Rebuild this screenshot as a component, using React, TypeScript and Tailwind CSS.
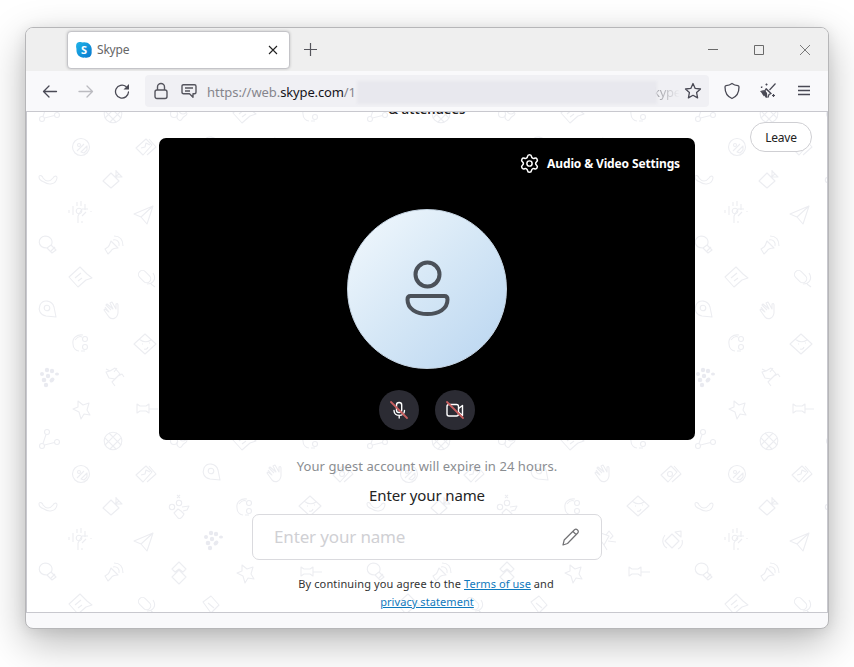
import { ReactNode } from 'react'
import { Settings } from 'lucide-react'

type Glyph = { x: number; y: number; art: ReactNode }

const TILE_HEIGHT = 327

const share = <><circle cx="-7" cy="5" r="2.500" /><circle cx="8" cy="1" r="2.500" /><circle cx="-2" cy="-9" r="2.500" /><path d="M-4.500 4 5.500 1.500M-6 2.500-3-6.500" /></>
const globe = <><circle r="8.800" /><path d="M-8-3 3 8M-4-8 8 4M-8 4 4-8M-3 8 8-3" /></>
const note = <path d="M-11 0 0-10 7-3 12 1 6 3-2 10zM-5 1 1-4M-2 4l4-3" />
const headset = <><path d="M3-8C-3-9-8-5-7 1c0 4 3 7 6 7M-5-3c3-4 5-4 7-3M1 8h4" /><circle cx="5" cy="-4" r="2.500" /><circle cx="5" cy="4" r="2.500" /></>
const gallery = <path d="M-10 1 0-8 6-2-3 8zM3-8l7 8L1 8M-5 1l4-1 1-4 4 2" />
const pin = <><path d="M-8-5c3-6 12-5 14 2l2 10-10-1c-6-1-8-6-6-11z" /><circle cx="-1" cy="-2" r="2.800" /></>
const hand = <path d="m-2-1-5-5 1-1 6 5-3-6 2-1 4 7V-7q2-1 2 1v8c-1 6-6 7-9 4L-9-1l1-1 4 3-4-5" />
const dice = <path d="M-11 0 0-10 11 0 0 10zM-6-5q6 5 12 1M-3 0h1M4-1h1M-1 5q3 1 4-2" />
const dots = <g fill="#e9eaf0" stroke="none"><circle cx="-7" cy="-3" r="2" /><circle cx="-2" cy="-7" r="2.200" /><circle cx="3" cy="-6" r="2.200" /><ellipse cx="8" cy="-3" rx="2" ry="1.500" /><circle cx="-5" cy="3" r="2.300" /><circle cx="-1" cy="-1" r="2.200" /><circle cx="-3" cy="8" r="2.200" /><ellipse cx="3" cy="3" rx="2.800" ry="2" transform="rotate(-45 3 3)" /></g>
const runner = <path d="M-8-8-4-6 1-9l5 6-5 5-6-1-3-6 4-1M0-5l3-4M2 1-2 5 1 9M4-1l4-2 2 3" />
const star = <path d="m-3-8 5 4 6-2-2 7 3 5-6-1-3 5-2-7-6-3 5-2z" />
const pushpin = <path d="M-9-5v9l3-2h6l3 2v-9L0-3h-6zM3-3v5M3 0h9" />

// One tile of the wallpaper, 328x327. Every glyph is drawn around its own centre.
const glyphs: Glyph[] = [
  { x: 22, y: 2, art: share },
  { x: 86, y: 2, art: globe },
  { x: 152, y: 2, art: <><circle cx="4" cy="-4" r="4" /><circle cx="-5" cy="0" r="3.500" /><path d="M-1 0C-4 4 1 9 3 5s5-2 5-6" /></> },
  { x: 217, y: 1, art: note },
  { x: 283, y: 1, art: headset },
  { x: 54, y: 35, art: <><circle r="8.500" /><circle cx="-2" cy="-2" r="1.500" /><path d="m-4 4 7-7M0 5l6-6v4L3 6z" /></> },
  { x: 119, y: 35, art: gallery },
  { x: 185, y: 34, art: pin },
  { x: 249, y: 35, art: hand },
  { x: 316, y: 35, art: <><path d="M-10 1 0-8 6-2-3 8zM3-8l7 8L1 8" /><circle cx="-1" r="2.500" /></> },
  { x: 21, y: 68, art: <path d="M-9-3c0-3 4-1 4 1 3 4 7 4 10 0 1-2 4-3 4 0C8 5 0 5-4 2c-3-1-5-3-5-5z" /> },
  { x: 85, y: 68, art: <path d="M-9 1-1-7 7 1-1 8zM4-10v7h6L4-9M3-3l4-3" /> },
  { x: 152, y: 69, art: <><circle cx="-7" cy="-1" r="2.700" /><circle cx="0" cy="-5" r="2.700" /><path d="M-5 5-1 1 2 3 5 6q-3 6-6 4zM3-1l7-1-2 4-4 1M-2-13l3 3M1-13l-3 3" /></> },
  { x: 217, y: 68, art: headset },
  { x: 283, y: 67, art: dice },
  { x: 53, y: 100, art: <><circle cx="-1" cy="-1" r="2.800" /><path d="M-7-6V3M-3-10v4M1-11v5M5-8v6M8-3H2L-2 4v7M2 4l4-4M-11-2v3M11-1v1M2 9v2" /></> },
  { x: 118, y: 102, art: <path d="M-11 0 8-8 2 10-4 3zM8-8-4 3" /> },
  { x: 186, y: 101, art: dots },
  { x: 251, y: 101, art: <path d="M-8-8 3-4-2 5-7-2zM0-5l3-4 4 5-3 3M2 1l8 1M-2 5l3 5" /> },
  { x: 317, y: 101, art: <path d="M-7 1 0-6 7 1 0 8zM3-8l6 5V-9zM-7-5c-4 5-2 11 2 13M6 9c4-2 5-6 4-9" /> },
  { x: 20, y: 132, art: <path d="M4 2C7-4 3-8-2-8c-8 1-8 12 2 12M0 4l4-3 5 5-4 3zM4 7l4-4" /> },
  { x: 87, y: 133, art: <path d="m-3-4 7 7C0 3-2 4-3 6L-6 9-9 4-6 2C-4 0-4-2-3-4zM0-9c6 0 9 4 9 10M-1-5C3-6 6-3 5 1" /> },
  { x: 152, y: 134, art: <path d="m-7-4 7-7 7 7-3 3-4-3-4 3zM-7 4l7-7 7 7-7 7z" /> },
  { x: 218, y: 134, art: star },
  { x: 283, y: 133, art: pushpin },
  { x: 53, y: 165, art: note },
  { x: 119, y: 166, art: <><rect x="-9" y="-4" width="14" height="8" rx="4" transform="rotate(45)" /><path d="M7-5c4 6 0 11-6 11M5 6l4 3" /></> },
  { x: 184, y: 166, art: <path d="M-8-3 0-9 8 0 0 8zM-3-2l6 5" /> },
  { x: 21, y: 198, art: pin },
  { x: 86, y: 199, art: hand },
  { x: 53, y: 231, art: headset },
  { x: 118, y: 232, art: dice },
  { x: 22, y: 265, art: dots },
  { x: 87, y: 265, art: runner },
  { x: 54, y: 297, art: star },
  { x: 119, y: 297, art: pushpin },
]

// Glyphs on the tile's upper edge are repeated on the lower one, so that none is cut.
const wrapped = glyphs
  .filter((g) => g.y < 12)
  .map((g) => ({ ...g, y: g.y + TILE_HEIGHT }))

function Wallpaper() {
  return (
    <svg className="absolute inset-0 size-full" fill="none">
      <defs>
        <pattern id="doodles" width="328" height={TILE_HEIGHT} patternUnits="userSpaceOnUse">
          <g stroke="#ecedf1" strokeWidth="1.1" strokeLinejoin="round">
            {[...glyphs, ...wrapped].map((g, i) => (
              <g key={i} transform={`translate(${g.x} ${g.y})`}>{g.art}</g>
            ))}
          </g>
        </pattern>
      </defs>
      <rect width="100%" height="100%" fill="url(#doodles)" />
    </svg>
  )
}

function TitleBar() {
  return (
    <div className="flex h-[43px] shrink-0 items-center bg-[#efefef] pl-[41px]">
      <div className="flex h-[38px] w-[223px] items-center rounded-[4px] border border-[#c4c4c8] bg-white pr-[11px] pl-2 shadow-[0_0_3px_rgba(0,0,0,0.2)]">
        <svg width="16" height="16" viewBox="0 0 16 16">
          <defs>
            <linearGradient id="skype" x1="0" y1="0" x2="1" y2="1">
              <stop stopColor="#20b4e8" />
              <stop offset="1" stopColor="#0878ce" />
            </linearGradient>
          </defs>
          <path d="M1 1c2-1.500 4-1 6-.6 6-.8 9.500 4 8.600 8.600.6 5-2 7.500-7 6.600C3 16 0 12 .5 7 0 5-.3 3 1 1z" fill="url(#skype)" />
          <text x="8" y="11.800" textAnchor="middle" fill="white" fontSize="11" fontWeight="700" fontFamily="Open Sans">S</text>
        </svg>
        <span className="ml-[5px] flex-1 text-[12px] tracking-[-0.2px] text-[#666]">Skype</span>
        <svg width="10" height="10" stroke="#222" strokeWidth="1.1"><path d="m1 1 8 8M9 1 1 9" /></svg>
      </div>
      <svg className="ml-[14px]" width="13" height="13" stroke="#55555c" strokeWidth="1.2"><path d="M6.500 0v13M0 6.500h13" /></svg>
      <div className="ml-auto flex items-center gap-9 pr-[18px]">
        <svg width="10" height="10" stroke="#6a6a6a"><path d="M0 4.500h10" /></svg>
        <svg width="10" height="10" stroke="#6a6a6a" fill="none"><path d="M.5.5h9v9h-9z" /></svg>
        <svg width="10" height="10" stroke="#7a7a7a"><path d="m0 0 10 10M10 0 0 10" /></svg>
      </div>
    </div>
  )
}

function Toolbar() {
  return (
    <div className="flex h-[41px] shrink-0 items-center border-b border-[#c8c8ce] bg-[#f9f9fb] pl-4">
      <svg width="16" height="16" fill="none" stroke="#4a4a55" strokeWidth="1.300" strokeLinecap="round" strokeLinejoin="round"><path d="M14.500 8.500H1.500M7 3 1.500 8.500 7 14" /></svg>
      <svg className="ml-5" width="16" height="16" fill="none" stroke="#bbbbc0" strokeWidth="1.300" strokeLinecap="round" strokeLinejoin="round"><path d="M1 8.500h13M9 3l5.500 5.500L9 14" /></svg>
      <svg className="ml-5" width="16" height="16" fill="none" stroke="#4a4a55" strokeWidth="1.300" strokeLinecap="round"><path d="M14.500 9A6.500 6.500 0 1 1 12 3.500" /><path d="M15 1v5.500H9.500z" fill="#4a4a55" stroke="none" /></svg>
      <div className="ml-[15px] flex h-8 w-[564px] items-center rounded-[4px] bg-[#f0f0f4] pl-[9px]">
        <svg width="14" height="18" fill="none" stroke="#55555e" strokeWidth="1.400"><rect x="1" y="8" width="12" height="8.500" rx="2" /><path d="M3.500 8V5a3.500 3.500 0 0 1 7 0v3" /></svg>
        <svg className="ml-[13px]" width="16" height="16" fill="none" stroke="#55555e" strokeWidth="1.400" strokeLinejoin="round"><path d="M2.500 1.700h11q1.500 0 1.500 1.500v6q0 1.500-1.500 1.500H12v3.500l-3.500-3.500h-6Q1 10.700 1 9.200v-6q0-1.500 1.500-1.500zM4 5h8M4 8h5" /></svg>
        <span className="mt-[3px] ml-[10px] text-[13px] tracking-[-0.05px] whitespace-nowrap text-[#85858c]">https://web.<span className="tracking-[-0.15px] text-[#15141a]">skype.com</span>/1</span>
        <div className="relative z-10 mt-0.5 -mr-1 ml-px h-[23px] flex-1 bg-[#e8e8ee] blur-[1px]" />
        <span className="mt-[3px] mask-r-from-10% mask-r-to-95% text-[13px] tracking-[-0.2px] text-[#9a9aa0]">kype</span>
        <svg className="mr-[7px] ml-[3px]" width="18" height="18" viewBox="0 0 18 18" fill="none" stroke="#4a4a55" strokeWidth="1.300" strokeLinejoin="round"><path d="m9 1.500 2.200 4.900 5.300.6-3.900 3.600 1 5.300L9 13.300l-4.600 2.600 1-5.300L1.500 7l5.300-.6z" /></svg>
      </div>
      <svg className="ml-[15px]" width="16" height="18" fill="none" stroke="#4a4a55" strokeWidth="1.300" strokeLinejoin="round"><path d="M8 1.500c2 1.500 4 2 6 2.200q1 .2 1 1.300c0 6-2 9.500-7 11.500C3 14.500 1 11 1 5q0-1.100 1-1.300c2-.2 4-.7 6-2.200z" /></svg>
      <svg className="ml-5" width="16" height="16" fill="none" stroke="#4a4a55" strokeWidth="1.2">
        <path d="m15.500.5-6 6.500M6 5.500l5 5M.5 8.500 5 7.500l1-1.500 5 4.500-2 1-1 3M5 8l1.500 3.500" />
        <path d="m.5 8.500 4.500-.5 2 2 .5 5-2-.5-1-2-.5 1-1.500-2-.5-1z" fill="#4a4a55" stroke="none" />
        <path d="M6.500.5v2M5.500 1.500h2M13.500 11v3M12 12.500h3M1.500 3.500v1.500M1 4h1.500" />
      </svg>
      <svg className="ml-[22px]" width="12" height="12" stroke="#4a4a55" strokeWidth="1.300"><path d="M0 1.500h12M0 5.500h12M0 9.500h12" /></svg>
    </div>
  )
}

function Preview() {
  return (
    <div className="relative mt-[-1px] flex h-[302px] w-[536px] flex-col items-center rounded-[7px] bg-black">
      <div className="flex h-[71px] w-full items-start justify-end gap-[7px] pt-[15px] pr-[15px] text-white">
        <Settings size={21} strokeWidth={1.7} />
        <span className="text-[12px] leading-[21px] font-bold tracking-[-0.14px]">Audio &amp; Video Settings</span>
      </div>
      <div className="flex size-40 shrink-0 items-center justify-center rounded-full border border-[#c5d4e2] bg-linear-to-br from-[#f3f9fd] via-[#d5e7f6] to-[#b9d5f0]">
        <svg width="46" height="58" fill="none" stroke="#4b5159" strokeWidth="4"><circle cx="23.500" cy="14.500" r="12" /><path d="M6.500 36h34q3 0 3 3.500C43.500 49 34.500 54 23.500 54S3.500 49 3.500 39.500Q3.500 36 6.500 36z" /></svg>
      </div>
      <div className="mt-[21px] flex gap-4">
        <div className="flex size-10 items-center justify-center rounded-full bg-[#2b2b33]">
          <svg width="20" height="20" fill="none" stroke="white" strokeWidth="1.400" strokeLinecap="round"><rect x="7.500" y="2.500" width="5.200" height="10" rx="2.600" /><path d="M5 10.500c0 6.500 10.500 6.500 10.500 0M10.200 15.500V18" /><path d="m2 2 16 16" stroke="#c95f60" strokeWidth="1.800" /></svg>
        </div>
        <div className="flex size-10 items-center justify-center rounded-full bg-[#2b2b33]">
          <svg width="20" height="20" fill="none" stroke="white" strokeWidth="1.400" strokeLinejoin="round"><rect x="2" y="4.500" width="11.500" height="11.500" rx="2" /><path d="m13.500 8.500 4-3v10L13.500 12" /><path d="m2 2 16 16" stroke="#c95f60" strokeWidth="1.800" strokeLinecap="round" /></svg>
        </div>
      </div>
    </div>
  )
}

export default function App() {
  return (
    <div className="h-[667px] w-[854px] overflow-hidden bg-white pt-[27px] pl-[25px] font-['Noto_Sans','Open_Sans',sans-serif]">
      <div className="flex h-[602px] w-[804px] flex-col overflow-hidden rounded-[8px] border border-[#b6b6b8] bg-[#f9f9fb] shadow-[0_14px_40px_rgba(0,0,0,0.28),0_2px_14px_rgba(0,0,0,0.08)]">
        <TitleBar />
        <Toolbar />
        <main className="relative flex h-[501px] shrink-0 flex-col items-center overflow-hidden border-x border-b border-[#c8c8ce] bg-white">
          <Wallpaper />
          {/* scrolled almost out of view; the padding keeps the negative margin inside */}
          <div className="relative flex h-[27px] items-start text-[13px] text-[#222]">
            <div className="mt-[-13px] leading-5 font-semibold">&amp; attendees</div>
          </div>
          <button className="absolute top-[10px] right-[15px] h-[30px] w-[62px] rounded-full border border-[#cfcfd3] bg-white pt-px text-[12px] tracking-[-0.2px] text-[#222]">Leave</button>
          <Preview />
          <p className="relative mt-4 text-[13px] leading-5 tracking-[0.07px] text-[#8a8d91]">Your guest account will expire in 24 hours.</p>
          <h1 className="relative mt-2 text-[15px] leading-[22px] tracking-[-0.13px] text-[#242424]">Enter your name</h1>
          <div className="relative mt-2 flex h-[46px] w-[350px] items-center justify-between rounded-[7px] border border-[#dadade] bg-white pr-[21px] pl-[21px] text-[17px] tracking-[-0.15px] text-[#d0d0d4]">
            Enter your name
            <svg width="18" height="18" fill="none" stroke="#717174" strokeWidth="1.200" strokeLinejoin="round"><path d="M1 17 2.200 12 12.500 1.800q1.500-1.200 3 .2t.2 3L5.500 15.500zM11 3.500 14.500 7" /></svg>
          </div>
          <p className="relative mt-[15px] mr-[2px] text-center text-[11px] leading-[18px] tracking-[0.07px] text-[#333]">
            <span className="tracking-[0.13px]">By continuing you agree to the </span><a className="text-[#0f79bd] underline">Terms of use</a> and
            <br />
            <a className="ml-[2px] text-[#0f79bd] underline">privacy statement</a>
          </p>
        </main>
      </div>
    </div>
  )
}
